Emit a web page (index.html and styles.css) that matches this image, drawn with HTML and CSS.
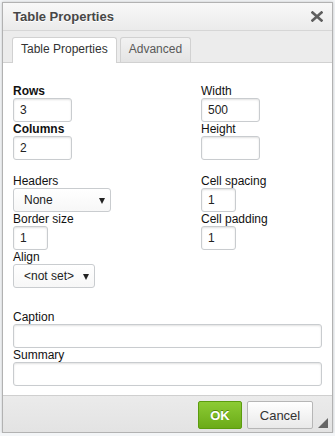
FILE: index.html
```html
<!DOCTYPE html>
<html>
	<head>
		<title>Table Properties</title>
		<meta charset="UTF-8">
		<link rel="stylesheet" href="styles.css">
	</head>
	<body>
		<div class='dialog'>
			<div class='titlebar'>
				<span class='title'>Table Properties</span>
				<a class='close' href='#'>
					<svg width="12" height="11" viewBox="0 0 12 11"><path d="M1.5 1.5 L10.5 9.5 M10.5 1.5 L1.5 9.5" stroke="#5f5f5f" stroke-width="2.6" stroke-linecap="square"/></svg>
				</a>
			</div>
			<div class='tabs'>
				<span class='tab active'>Table Properties</span>
				<span class='tab'>Advanced</span>
			</div>
			<div class='content'>
				<div class='cols'>
					<div class='col left'>
						<div class='field'>
							<label class='bold'>Rows</label>
							<input class='txt w59' type='text' value='3'>
						</div>
						<div class='field'>
							<label class='bold'>Columns</label>
							<input class='txt w59' type='text' value='2'>
						</div>
						<div class='spacer'></div>
						<div class='field'>
							<label>Headers</label>
							<span class='sel w98'><select><option>None</option></select></span>
						</div>
						<div class='field'>
							<label>Border size</label>
							<input class='txt w35' type='text' value='1'>
						</div>
						<div class='field'>
							<label>Align</label>
							<span class='sel w82'><select><option>&lt;not set&gt;</option></select></span>
						</div>
					</div>
					<div class='col'>
						<div class='field'>
							<label>Width</label>
							<input class='txt w59' type='text' value='500'>
						</div>
						<div class='field'>
							<label>Height</label>
							<input class='txt w59' type='text' value=''>
						</div>
						<div class='spacer'></div>
						<div class='field'>
							<label>Cell spacing</label>
							<input class='txt w35' type='text' value='1'>
						</div>
						<div class='field'>
							<label>Cell padding</label>
							<input class='txt w35' type='text' value='1'>
						</div>
					</div>
				</div>
				<div class='wide'>
					<div class='field'>
						<label>Caption</label>
						<input class='txt full' type='text' value=''>
					</div>
					<div class='field'>
						<label>Summary</label>
						<input class='txt full' type='text' value=''>
					</div>
				</div>
			</div>
			<div class='footer'>
				<button type='button' class='btn ok'>OK</button>
				<button type='button' class='btn cancel'>Cancel</button>
				<span class='grip'></span>
			</div>
		</div>
	</body>
</html>
```

FILE: styles.css
```css
*{
	box-sizing:border-box;
}
body{
	margin:0;
	background-color:#f4f6f8;
	font-family:"Liberation Sans", Arial, sans-serif;
	font-size:12px;
}
.dialog{
	margin:2px 0 0 2px;
	width:331px;
	height:431px;
	border:1px solid #b2b2b2;
	background-color:#fff;
	display:flex;
	flex-direction:column;
	box-shadow:0 0 3px rgba(0,0,0,0.2);
}
.titlebar{
	display:flex;
	justify-content:space-between;
	align-items:flex-start;
	padding:6px 9px 6px 10px;
	line-height:15px;
	height:28px;
	border-bottom:1px solid #d6d6d6;
	background:linear-gradient(#f8f8f8, #ebebeb);
}
.title{
	font-size:13px;
	font-weight:bold;
	color:#474747;
	text-shadow:0 1px 0 #fff;
}
.close{
	display:block;
	margin-top:2px;
	line-height:0;
}
.tabs{
	display:flex;
	padding:6px 0 0 9px;
	height:32px;
	background-color:#ececec;
	border-bottom:1px solid #d1d1d1;
}
.tab{
	height:25px;
	line-height:23px;
	padding:0 8px;
	margin-right:3px;
	border:1px solid #d1d1d1;
	border-bottom:none;
	border-radius:3px 3px 0 0;
	background:linear-gradient(#f2f2f2, #e4e4e4);
	color:#595959;
}
.tab.active{
	background:#fff;
	color:#333;
	height:26px;
	margin-bottom:-1px;
}
.content{
	flex:1;
	padding:21px 10px 0 10px;
}
.cols{
	display:flex;
}
.col.left{
	width:188px;
}
.field label{
	display:block;
	height:14px;
	line-height:14px;
	color:#111;
	white-space:nowrap;
}
.field label.bold{
	font-weight:bold;
}
.spacer{
	height:14px;
}
.txt{
	display:block;
	height:24px;
	padding:0 6px;
	border:1px solid #c9cccf;
	border-radius:3px;
	box-shadow:inset 0 1px 2px rgba(0,0,0,0.12);
	font-family:"Liberation Sans", Arial, sans-serif;
	font-size:12px;
	color:#222;
	background:#fff;
}
.w59{ width:59px; }
.w35{ width:35px; }
.w98{ width:98px; }
.w82{ width:82px; }
.full{ width:309px; }
.sel{
	display:block;
	position:relative;
	height:24px;
}
.sel select{
	-webkit-appearance:none;
	appearance:none;
	width:100%;
	height:24px;
	padding:0 0 0 10px;
	border:1px solid #c9cccf;
	border-radius:3px;
	background:linear-gradient(#fff, #f7f7f7);
	font-family:"Liberation Sans", Arial, sans-serif;
	font-size:12px;
	color:#222;
}
.sel::after{
	content:'';
	position:absolute;
	right:6px;
	top:10px;
	border-left:3px solid transparent;
	border-right:3px solid transparent;
	border-top:6px solid #222;
}
.wide{
	margin-top:22px;
}
.footer{
	position:relative;
	display:flex;
	justify-content:flex-end;
	gap:5px;
	height:37px;
	padding:5px 19px 0 0;
	border-top:1px solid #cfcfcf;
	background:linear-gradient(#ebebeb, #e3e3e3);
}
.btn{
	height:28px;
	border-radius:2px;
	font-family:"Liberation Sans", Arial, sans-serif;
	font-size:13px;
	cursor:pointer;
}
.btn.ok{
	width:44px;
	border:1px solid #5b9c0e;
	background:linear-gradient(#8ccb34, #6bab18);
	color:#fff;
	font-weight:bold;
	text-shadow:0 -1px 0 #55880f;
}
.btn.cancel{
	width:66px;
	border:1px solid #b6b6b6;
	background:linear-gradient(#fff, #e9e9e9);
	color:#333;
}
.btn:hover{
	box-shadow:0 0 2px grey;
}
.grip{
	position:absolute;
	right:4px;
	bottom:4px;
	width:0;
	height:0;
	border-left:10px solid transparent;
	border-bottom:10px solid #666;
}
```
